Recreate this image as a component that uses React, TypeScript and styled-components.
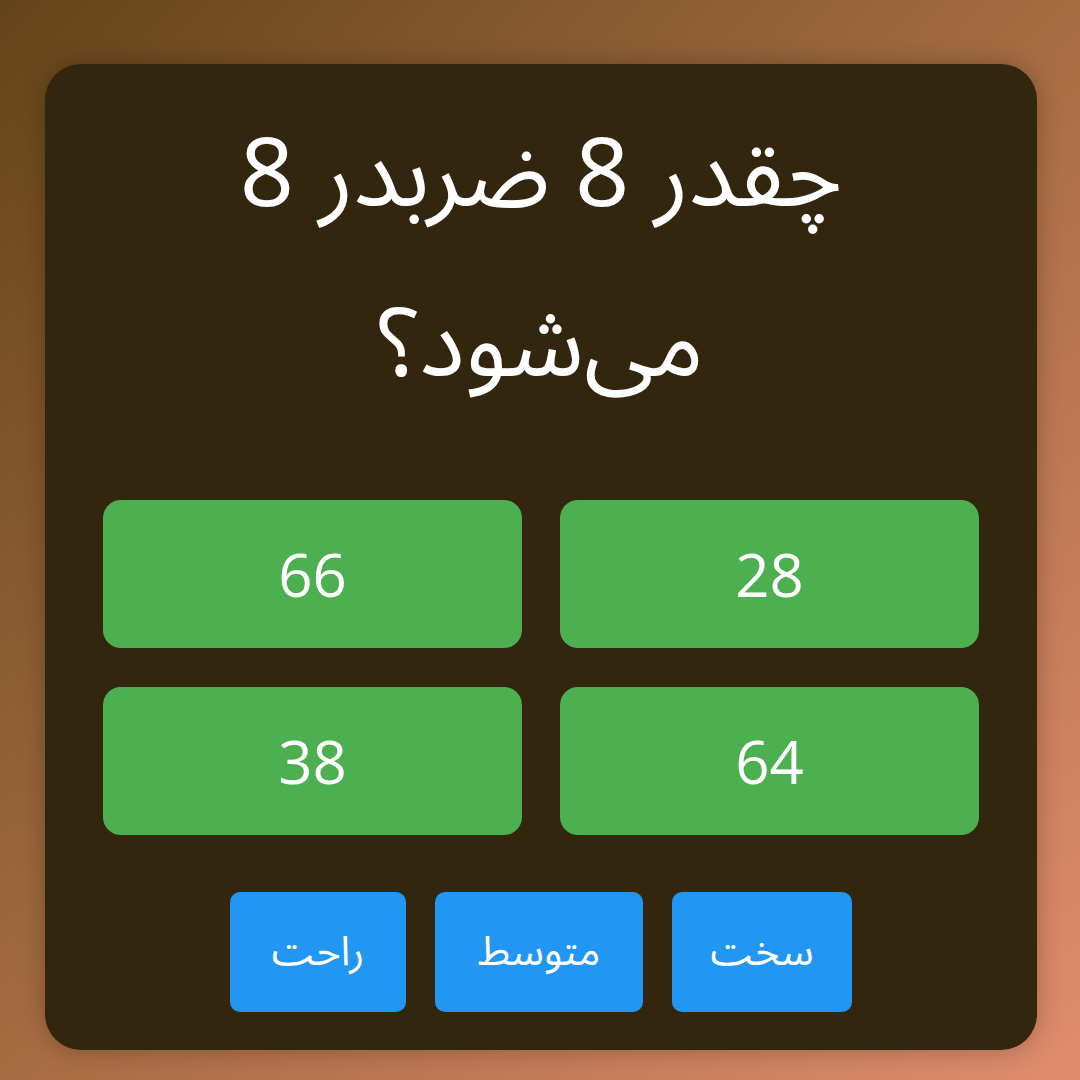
import styled, { createGlobalStyle } from "styled-components";

const GlobalStyle = createGlobalStyle`
  html, body {
    margin: 0;
    padding: 0;
  }
  body {
    width: 1080px;
    height: 1080px;
    background: linear-gradient(135deg, #634418 0%, #a66c42 50%, #e18c6e 100%);
    font-family: "Noto Sans", "Noto Sans Arabic", sans-serif;
  }
`;

const Page = styled.div`
  width: 1080px;
  height: 1080px;
  box-sizing: border-box;
  padding: 64px 0 0 2px;
  display: flex;
  justify-content: center;
`;

const Card = styled.div`
  direction: rtl;
  width: 992px;
  height: 986px;
  box-sizing: border-box;
  background: #32260e;
  border-radius: 36px;
  box-shadow: 0 0 24px rgba(0, 0, 0, 0.25);
  padding: 20px 58px 38px;
  display: flex;
  flex-direction: column;
  align-items: center;
`;

const Question = styled.h1`
  margin: 0;
  color: #fff;
  font-weight: normal;
  font-size: 95px;
  line-height: 170px;
  text-align: center;
  width: 700px;
`;

const Answers = styled.div`
  margin-top: 76px;
  width: 100%;
  display: grid;
  grid-template-columns: 1fr 1fr;
  column-gap: 38px;
  row-gap: 39px;
`;

const Answer = styled.button`
  height: 148px;
  border: none;
  border-radius: 18px;
  background: #4caf50;
  color: #fff;
  font-family: "Open Sans", sans-serif;
  font-size: 60px;
`;

const Levels = styled.div`
  margin-top: 57px;
  display: flex;
  gap: 29px;
`;

const Level = styled.button<{ $w: number }>`
  width: ${({ $w }) => $w}px;
  height: 120px;
  border: none;
  border-radius: 10px;
  background: #2196f3;
  color: #fff;
  font-family: "Noto Sans", "Noto Sans Arabic", sans-serif;
  font-size: 41px;
`;

export default function App() {
  return (
    <Page>
      <GlobalStyle />
      <Card>
        <Question>چقدر 8 ضربدر 8 می‌شود؟</Question>
        <Answers>
          <Answer>28</Answer>
          <Answer>66</Answer>
          <Answer>64</Answer>
          <Answer>38</Answer>
        </Answers>
        <Levels>
          <Level $w={180}>سخت</Level>
          <Level $w={208}>متوسط</Level>
          <Level $w={176}>راحت</Level>
        </Levels>
      </Card>
    </Page>
  );
}
